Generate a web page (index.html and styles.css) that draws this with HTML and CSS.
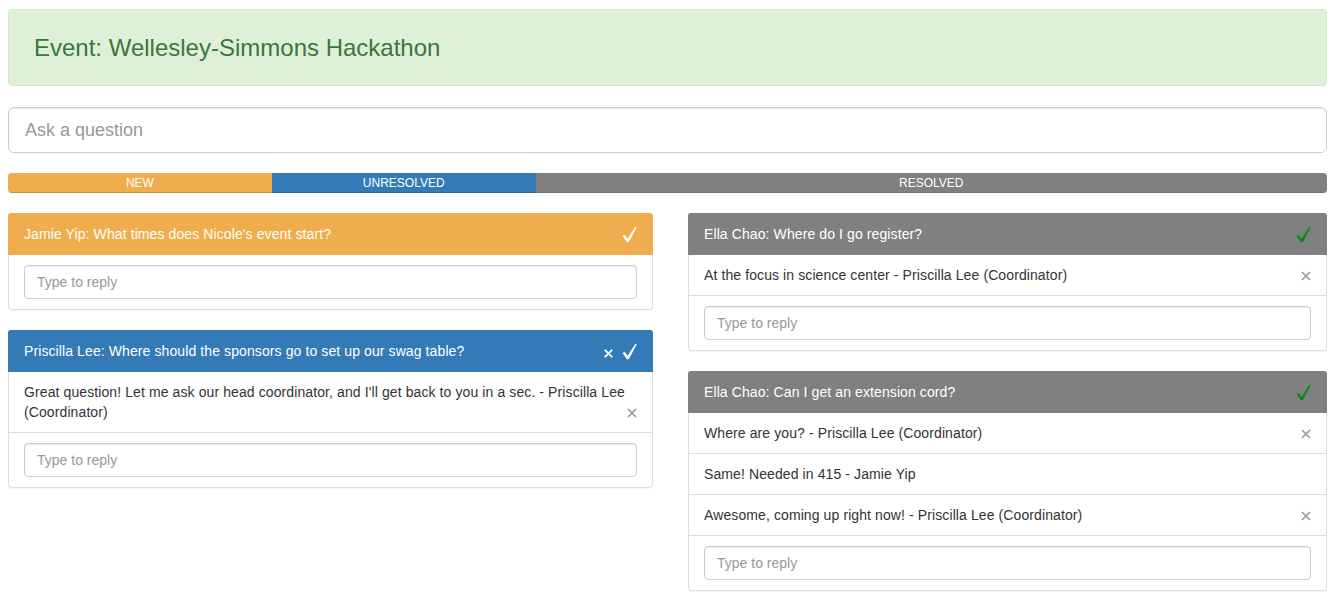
FILE: index.html
```html
<!DOCTYPE html>
<html>
<head>
<meta charset="utf-8">
<title>Event Q&amp;A</title>
<link rel="stylesheet" href="styles.css">
</head>
<body>
<div class="page">
<div class="alert">
  <h3 class="alert-title">Event: Wellesley-Simmons Hackathon</h3>
</div>

<input class="ask" type="text" placeholder="Ask a question">

<div class="progress">
  <div class="bar bar-new" style="width:20%">NEW</div>
  <div class="bar bar-unresolved" style="width:20%">UNRESOLVED</div>
  <div class="bar bar-resolved" style="width:60%">RESOLVED</div>
</div>

<div class="columns">
  <div class="column">
    <div class="panel">
      <div class="panel-heading heading-new">
        <span class="title">Jamie Yip: What times does Nicole's event start?</span>
        <span class="icons">
          <svg class="check" viewBox="0 0 16 18"><path d="M0.6 10.6 L2.6 9.2 L6 13.6 L14.4 0.4 L15.6 1.4 L7.2 17.2 L5.2 17.2 Z" fill="#fff"/></svg>
        </span>
      </div>
      <div class="panel-body">
        <input class="reply" type="text" placeholder="Type to reply">
      </div>
    </div>

    <div class="panel">
      <div class="panel-heading heading-unresolved">
        <span class="title">Priscilla Lee: Where should the sponsors go to set up our swag table?</span>
        <span class="icons">
          <svg class="hx" viewBox="0 0 10 10"><path d="M1.5 1.5 L8.5 8.5 M8.5 1.5 L1.5 8.5" stroke="#fff" stroke-width="2.2" stroke-linecap="round"/></svg>
          <svg class="check" viewBox="0 0 16 18"><path d="M0.6 10.6 L2.6 9.2 L6 13.6 L14.4 0.4 L15.6 1.4 L7.2 17.2 L5.2 17.2 Z" fill="#fff"/></svg>
        </span>
      </div>
      <ul class="list">
        <li class="item">Great question! Let me ask our head coordinator, and I'll get back to you in a sec. - Priscilla Lee (Coordinator)<span class="close"><svg class="lx" viewBox="0 0 10 10"><path d="M1 1 L9 9 M9 1 L1 9" stroke="#999" stroke-width="1.7"/></svg></span></li>
      </ul>
      <div class="panel-body">
        <input class="reply" type="text" placeholder="Type to reply">
      </div>
    </div>
  </div>

  <div class="column">
    <div class="panel">
      <div class="panel-heading heading-resolved">
        <span class="title">Ella Chao: Where do I go register?</span>
        <span class="icons">
          <svg class="check" viewBox="0 0 16 18"><path d="M0.6 10.6 L2.6 9.2 L6 13.6 L14.4 0.4 L15.6 1.4 L7.2 17.2 L5.2 17.2 Z" fill="#0f8a0f"/></svg>
        </span>
      </div>
      <ul class="list">
        <li class="item">At the focus in science center - Priscilla Lee (Coordinator)<span class="close"><svg class="lx" viewBox="0 0 10 10"><path d="M1 1 L9 9 M9 1 L1 9" stroke="#999" stroke-width="1.7"/></svg></span></li>
      </ul>
      <div class="panel-body">
        <input class="reply" type="text" placeholder="Type to reply">
      </div>
    </div>

    <div class="panel">
      <div class="panel-heading heading-resolved">
        <span class="title">Ella Chao: Can I get an extension cord?</span>
        <span class="icons">
          <svg class="check" viewBox="0 0 16 18"><path d="M0.6 10.6 L2.6 9.2 L6 13.6 L14.4 0.4 L15.6 1.4 L7.2 17.2 L5.2 17.2 Z" fill="#0f8a0f"/></svg>
        </span>
      </div>
      <ul class="list">
        <li class="item">Where are you? - Priscilla Lee (Coordinator)<span class="close"><svg class="lx" viewBox="0 0 10 10"><path d="M1 1 L9 9 M9 1 L1 9" stroke="#999" stroke-width="1.7"/></svg></span></li>
        <li class="item">Same! Needed in 415 - Jamie Yip</li>
        <li class="item">Awesome, coming up right now! - Priscilla Lee (Coordinator)<span class="close"><svg class="lx" viewBox="0 0 10 10"><path d="M1 1 L9 9 M9 1 L1 9" stroke="#999" stroke-width="1.7"/></svg></span></li>
      </ul>
      <div class="panel-body">
        <input class="reply" type="text" placeholder="Type to reply">
      </div>
    </div>
  </div>
</div>
</div>
</body>
</html>
```

FILE: styles.css
```css
* { box-sizing: border-box; }

body {
  margin: 8px;
  font-family: "Liberation Sans", Arial, sans-serif;
  font-size: 14px;
  line-height: 20px;
  color: #333;
  background: #fff;
}

.page {
  width: 1319px;
}

.alert {
  margin-top: 1px;
  height: 77px;
  padding: 0 25px;
  display: flex;
  align-items: center;
  background: #dff0d8;
  border: 1px solid #d6e9c6;
  border-radius: 4px;
  color: #3c763d;
}

.alert-title {
  margin: 0;
  font-size: 24px;
  font-weight: normal;
  line-height: 28px;
}

.ask {
  display: block;
  width: 100%;
  height: 46px;
  margin-top: 21px;
  padding: 10px 16px;
  font-family: inherit;
  font-size: 18px;
  color: #555;
  border: 1px solid #ccc;
  border-radius: 6px;
  box-shadow: inset 0 1px 1px rgba(0,0,0,.075);
  outline: none;
}

.ask::placeholder, .reply::placeholder { color: #999; }

.progress {
  display: flex;
  height: 20px;
  margin-top: 20px;
  margin-bottom: 20px;
  border-radius: 4px;
  overflow: hidden;
  background: #f5f5f5;
}

.bar {
  height: 100%;
  font-size: 12px;
  line-height: 20px;
  color: #fff;
  text-align: center;
  box-shadow: inset 0 -1px 0 rgba(0,0,0,.15);
}

.bar-new { background: #f0ad4e; }
.bar-unresolved { background: #337ab7; }
.bar-resolved { background: #808080; }

.columns {
  display: grid;
  grid-template-columns: 645px 639px;
  column-gap: 35px;
  align-items: start;
}

.panel {
  margin-bottom: 20px;
  border: 1px solid #ddd;
  border-radius: 4px;
  background: #fff;
  box-shadow: 0 1px 1px rgba(0,0,0,.05);
}

.panel-heading {
  display: flex;
  align-items: center;
  justify-content: space-between;
  height: 42px;
  padding: 0 15px 0 16px;
  margin: -1px -1px 0;
  border-radius: 3px 3px 0 0;
  color: #fff;
}

.title {
  letter-spacing: 0.1px;
}

.heading-new { background: #f0ad4e; }
.heading-unresolved { background: #337ab7; }
.heading-resolved { background: #808080; }

.icons {
  display: flex;
  align-items: center;
  gap: 9px;
  margin-right: 1px;
}

.check {
  display: block;
  width: 15px;
  height: 17px;
  margin-top: 1px;
}

.hx {
  display: block;
  width: 9px;
  height: 9px;
  margin-top: 4px;
}

.list {
  list-style: none;
  margin: 0;
  padding: 0;
}

.item {
  padding: 10px 15px;
  border-bottom: 1px solid #ddd;
  letter-spacing: 0.1px;
}

.item::after {
  content: "";
  display: block;
  clear: both;
}

.close {
  float: right;
  display: flex;
  align-items: center;
  height: 20px;
  margin-left: 8px;
}

.lx {
  display: block;
  width: 10px;
  height: 10px;
  margin-top: 1px;
}

.panel-body {
  padding: 10px 15px;
}

.reply {
  display: block;
  width: 100%;
  height: 34px;
  padding: 6px 12px;
  font-family: inherit;
  font-size: 14px;
  color: #555;
  border: 1px solid #ccc;
  border-radius: 4px;
  box-shadow: inset 0 1px 1px rgba(0,0,0,.075);
  outline: none;
}
```
